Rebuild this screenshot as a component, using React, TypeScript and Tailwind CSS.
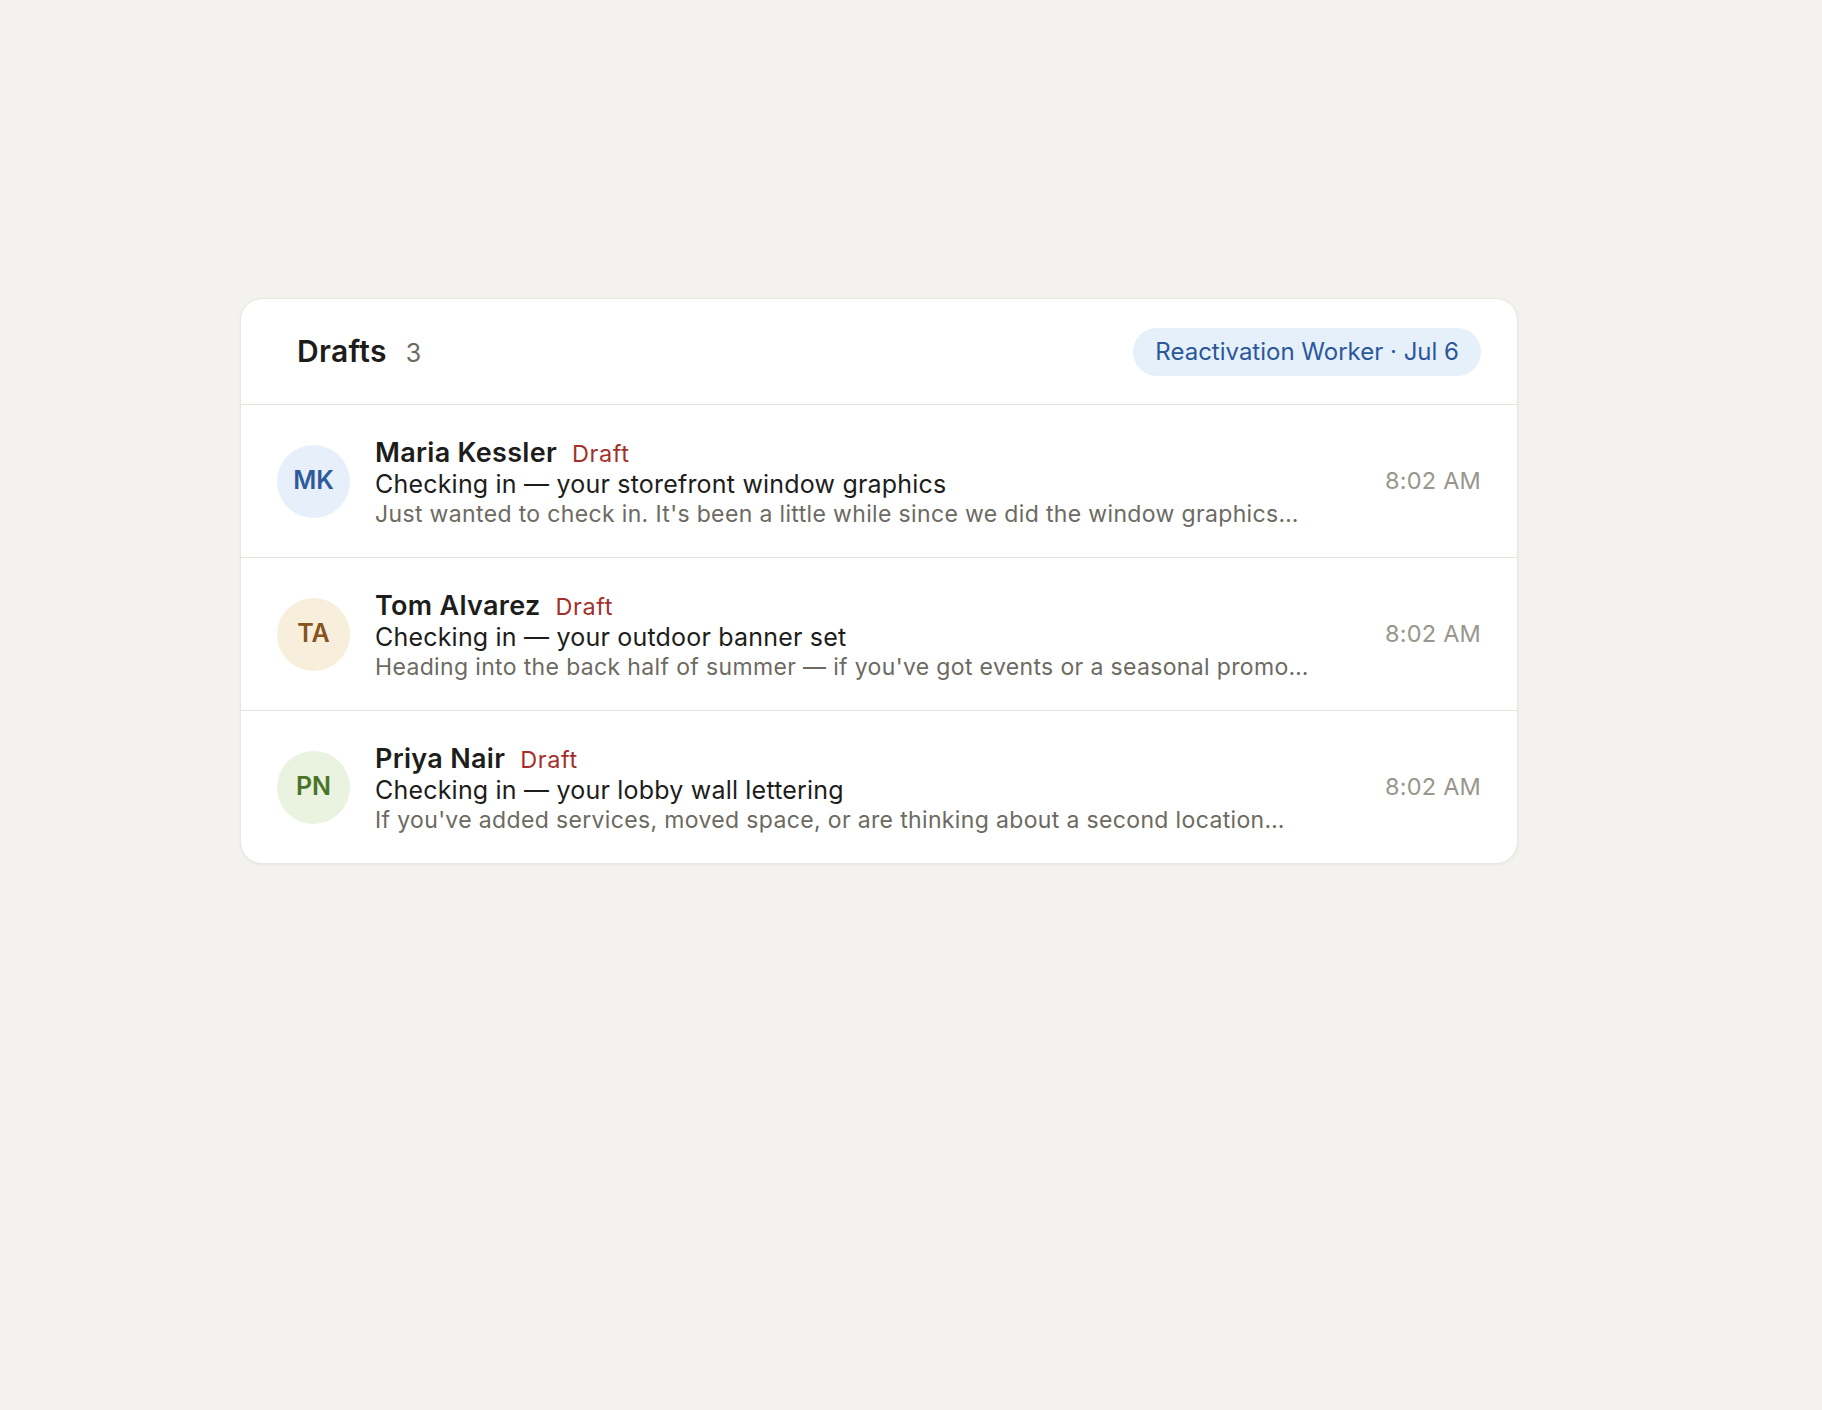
import React from 'react';

interface Draft {
  initials: string;
  name: string;
  subject: string;
  preview: string;
  time: string;
  avatar: string;
}

const drafts: Draft[] = [
  {
    initials: 'MK',
    name: 'Maria Kessler',
    subject: 'Checking in — your storefront window graphics',
    preview: "Just wanted to check in. It's been a little while since we did the window graphics…",
    time: '8:02 AM',
    avatar: 'bg-[#e7f0fa] text-[#2c5a9c]',
  },
  {
    initials: 'TA',
    name: 'Tom Alvarez',
    subject: 'Checking in — your outdoor banner set',
    preview: "Heading into the back half of summer — if you've got events or a seasonal promo…",
    time: '8:02 AM',
    avatar: 'bg-[#f8eedc] text-[#85531c]',
  },
  {
    initials: 'PN',
    name: 'Priya Nair',
    subject: 'Checking in — your lobby wall lettering',
    preview: "If you've added services, moved space, or are thinking about a second location…",
    time: '8:02 AM',
    avatar: 'bg-[#eaf2e0] text-[#4a7428]',
  },
];

const DraftRow: React.FC<{ draft: Draft }> = ({ draft }) => (
  <div className="flex items-center h-[153px] px-[36px] border-t border-[#e6e4dd]">
    <div
      className={`w-[73px] h-[73px] rounded-full flex items-center justify-center text-[25px] font-semibold shrink-0 ${draft.avatar}`}
    >
      {draft.initials}
    </div>
    <div className="flex-1 min-w-0 ml-[25px] pt-[4px]">
      <div className="flex items-baseline">
        <span className="text-[27px] leading-[30px] font-semibold tracking-[0.3px] text-[#1d1d1b]">{draft.name}</span>
        <span className="ml-[15px] text-[23.5px] leading-[30px] tracking-[0.6px] text-[#a3302b]">Draft</span>
      </div>
      <div className="text-[25px] leading-[31px] tracking-[0.2px] text-[#1d1d1b]">{draft.subject}</div>
      <div className="text-[23px] leading-[28px] tracking-[0.35px] text-[#6c6a62]">{draft.preview}</div>
    </div>
    <div className="text-[23.5px] tracking-[0.2px] text-[#98968d] shrink-0">{draft.time}</div>
  </div>
);

export default function App() {
  return (
    <div
      className="min-h-[1410px] bg-[#f3f2ee] pt-[298px] pl-[240px]"
      style={{ fontFamily: 'Inter, "Noto Sans", "Liberation Sans", sans-serif' }}
    >
      <div className="w-[1278px] bg-white rounded-[22px] border border-[#e8e6df] shadow-[0_1px_3px_rgba(0,0,0,0.05)] overflow-hidden">
        <div className="flex items-center justify-between h-[105px] pl-[56px] pr-[36px]">
          <div className="flex items-baseline">
            <span className="text-[30px] font-semibold tracking-[0.3px] text-[#1d1d1b]">Drafts</span>
            <span className="ml-[19px] text-[25px] text-[#6c6a62]">3</span>
          </div>
          <div className="h-[48px] px-[22px] rounded-full bg-[#e6f0fa] text-[#2b579b] text-[24px] flex items-center">
            Reactivation Worker · Jul 6
          </div>
        </div>
        {drafts.map(d => (
          <DraftRow key={d.initials} draft={d} />
        ))}
      </div>
    </div>
  );
}
